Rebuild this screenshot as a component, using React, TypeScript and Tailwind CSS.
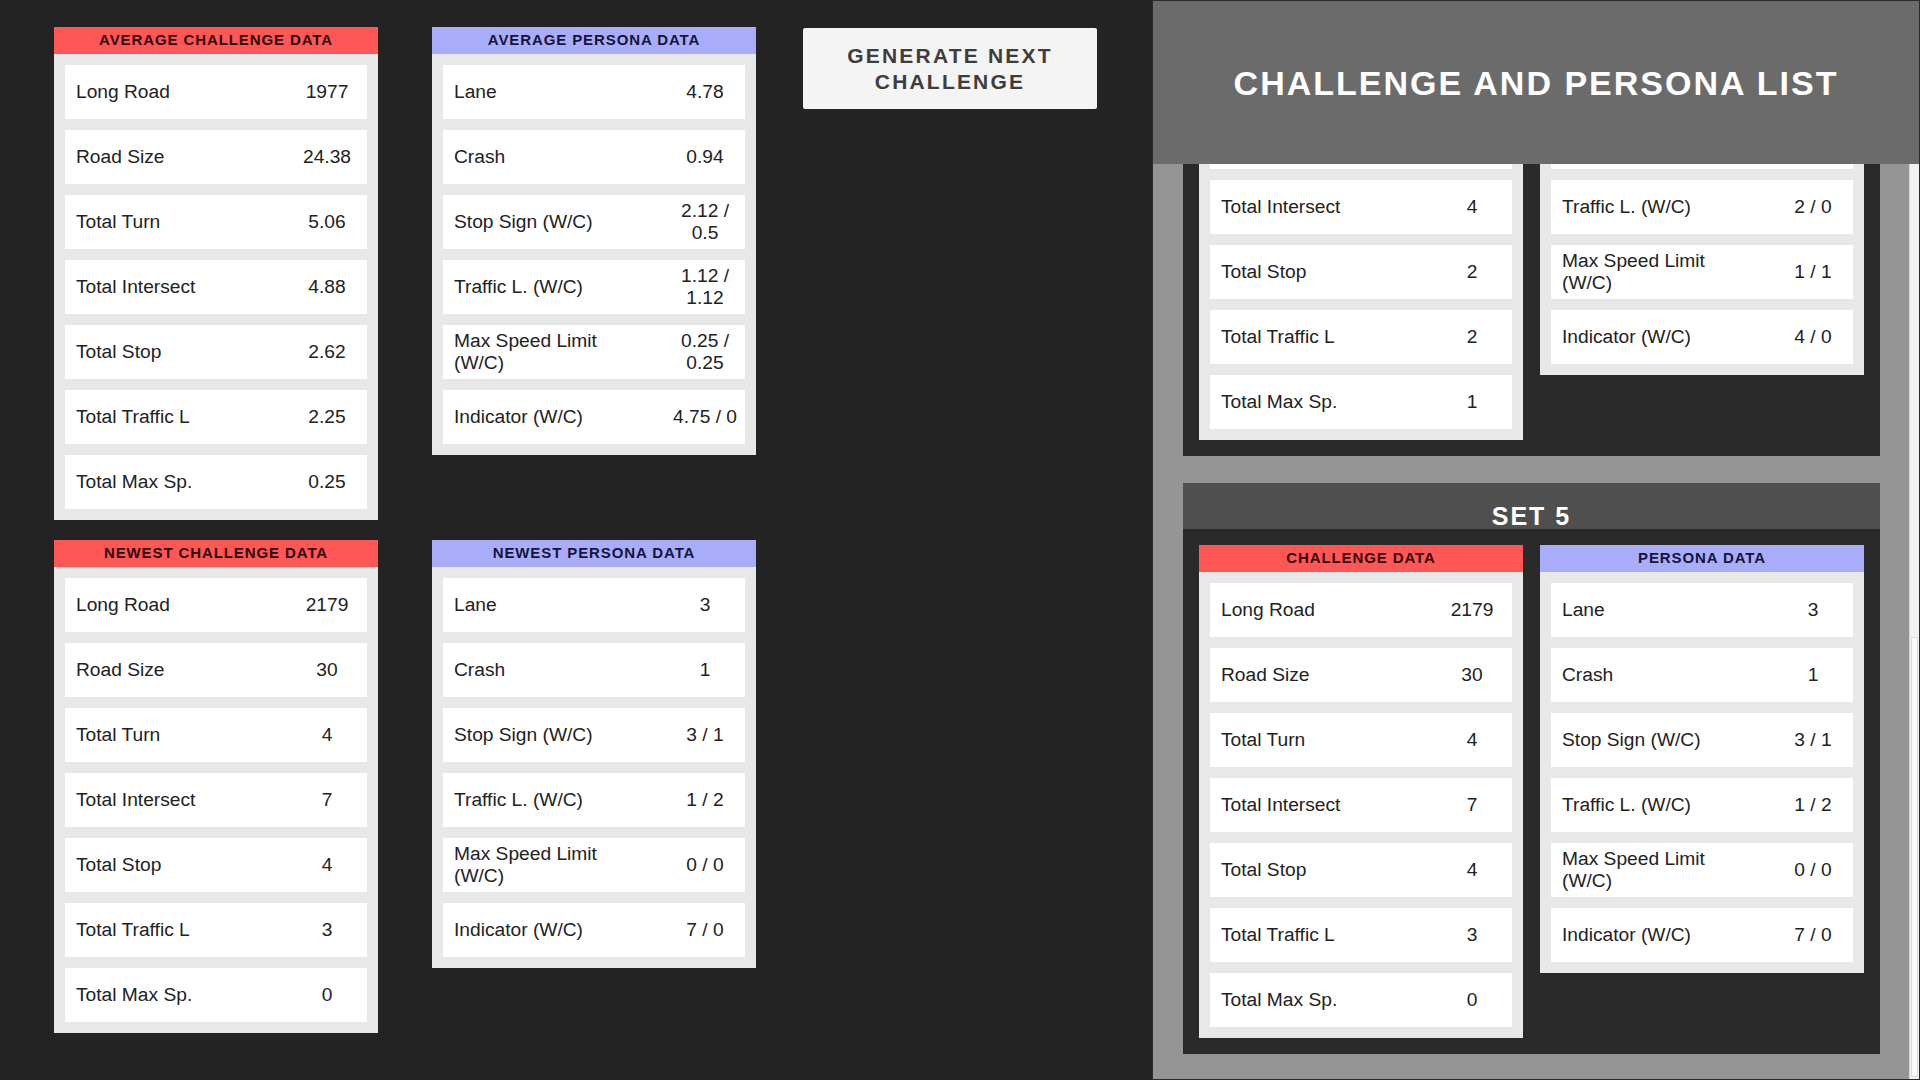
import React from "react";

type Row = { label: string; value: string };

const AVG_CHALLENGE: Row[] = [
  { label: "Long Road", value: "1977" },
  { label: "Road Size", value: "24.38" },
  { label: "Total Turn", value: "5.06" },
  { label: "Total Intersect", value: "4.88" },
  { label: "Total Stop", value: "2.62" },
  { label: "Total Traffic L", value: "2.25" },
  { label: "Total Max Sp.", value: "0.25" },
];

const AVG_PERSONA: Row[] = [
  { label: "Lane", value: "4.78" },
  { label: "Crash", value: "0.94" },
  { label: "Stop Sign (W/C)", value: "2.12 / 0.5" },
  { label: "Traffic L. (W/C)", value: "1.12 / 1.12" },
  { label: "Max Speed Limit (W/C)", value: "0.25 / 0.25" },
  { label: "Indicator (W/C)", value: "4.75 / 0" },
];

const NEW_CHALLENGE: Row[] = [
  { label: "Long Road", value: "2179" },
  { label: "Road Size", value: "30" },
  { label: "Total Turn", value: "4" },
  { label: "Total Intersect", value: "7" },
  { label: "Total Stop", value: "4" },
  { label: "Total Traffic L", value: "3" },
  { label: "Total Max Sp.", value: "0" },
];

const NEW_PERSONA: Row[] = [
  { label: "Lane", value: "3" },
  { label: "Crash", value: "1" },
  { label: "Stop Sign (W/C)", value: "3 / 1" },
  { label: "Traffic L. (W/C)", value: "1 / 2" },
  { label: "Max Speed Limit (W/C)", value: "0 / 0" },
  { label: "Indicator (W/C)", value: "7 / 0" },
];

const SETS = [
  {
    id: 4,
    challenge: [
      { label: "Long Road", value: "1845" },
      { label: "Road Size", value: "25" },
      { label: "Total Turn", value: "5" },
      { label: "Total Intersect", value: "4" },
      { label: "Total Stop", value: "2" },
      { label: "Total Traffic L", value: "2" },
      { label: "Total Max Sp.", value: "1" },
    ],
    persona: [
      { label: "Lane", value: "4" },
      { label: "Crash", value: "1" },
      { label: "Stop Sign (W/C)", value: "2 / 1" },
      { label: "Traffic L. (W/C)", value: "2 / 0" },
      { label: "Max Speed Limit (W/C)", value: "1 / 1" },
      { label: "Indicator (W/C)", value: "4 / 0" },
    ],
  },
  { id: 5, challenge: NEW_CHALLENGE, persona: NEW_PERSONA },
];

function DataPanel({ title, rows, kind }: { title: string; rows: Row[]; kind: "challenge" | "persona" }) {
  return (
    <div className="w-[324px] bg-[#e8e8e8]">
      {/* coloured title strip */}
      <div
        className={
          kind === "challenge"
            ? "h-[27px] flex items-center justify-center bg-[#ff5656] text-[#2e0606] text-[15px] font-bold tracking-[0.9px]"
            : "h-[27px] flex items-center justify-center bg-[#a9adf9] text-[#15153a] text-[15px] font-bold tracking-[0.9px]"
        }
      >
        {title}
      </div>
      <div className="flex flex-col gap-[11px] p-[11px]">
        {rows.map((row) => (
          <div key={row.label} className="h-[54px] flex items-center bg-white text-[19.2px] leading-[22px] text-[#222222]">
            <div className="flex-1 pl-[11px] pr-[30px]">{row.label}</div>
            <div className="w-[80px] shrink-0 px-[2px] text-center">{row.value}</div>
          </div>
        ))}
      </div>
    </div>
  );
}

function SetCard({ id, challenge, persona }: { id: number; challenge: Row[]; persona: Row[] }) {
  return (
    <div className="shrink-0 bg-[#2a2a2a]">
      <div className="h-[46px] flex items-end justify-center bg-[#4f4f4f]">
        <span className="text-[25px] leading-none font-bold text-white tracking-[2px]">SET {id}</span>
      </div>
      <div className="flex items-start gap-[17px] p-[16px]">
        <DataPanel title="CHALLENGE DATA" rows={challenge} kind="challenge" />
        <DataPanel title="PERSONA DATA" rows={persona} kind="persona" />
      </div>
    </div>
  );
}

export default function App() {
  return (
    <div className="w-[1920px] h-[1080px] flex bg-[#232323] font-['Liberation_Sans',Arial,sans-serif] overflow-hidden">
      {/* Stats area */}
      <div className="flex-1 flex items-start pl-[54px] pt-[27px]">
        <div className="grid grid-cols-[324px_324px] gap-x-[54px] gap-y-[20px] items-start">
          <DataPanel title="AVERAGE CHALLENGE DATA" rows={AVG_CHALLENGE} kind="challenge" />
          <DataPanel title="AVERAGE PERSONA DATA" rows={AVG_PERSONA} kind="persona" />
          <DataPanel title="NEWEST CHALLENGE DATA" rows={NEW_CHALLENGE} kind="challenge" />
          <DataPanel title="NEWEST PERSONA DATA" rows={NEW_PERSONA} kind="persona" />
        </div>
        <button className="ml-[47px] mt-[1px] w-[294px] h-[81px] px-[30px] bg-[#f4f4f4] rounded-[2px] text-[21px] leading-[26px] font-bold tracking-[2.2px] text-[#3d3d3d]">
          GENERATE NEXT CHALLENGE
        </button>
      </div>

      {/* Challenge list side panel */}
      <div className="w-[768px] h-[1080px] flex flex-col border border-[#2b2b2b]">
        <div className="h-[163px] shrink-0 flex items-center justify-center bg-[#6b6b6b]">
          <h1 className="text-[34px] leading-[40px] font-bold text-white tracking-[2px]">CHALLENGE AND PERSONA LIST</h1>
        </div>
        <div className="flex-1 min-h-0 flex bg-[#959595]">
          <div className="flex-1 min-h-0 flex flex-col justify-end gap-[27px] pl-[30px] pr-[29px] pb-[25px] overflow-hidden">
            {SETS.map((s) => (
              <SetCard key={s.id} id={s.id} challenge={s.challenge} persona={s.persona} />
            ))}
          </div>
          {/* scrollbar */}
          <div className="w-[10px] flex flex-col bg-[#f1f1f1] border-l border-[#d8d8d8]">
            <div className="flex-1" />
            <div className="h-[440px] mx-[1px] mb-[2px] bg-[#fafafa] border border-[#dcdcdc]" />
          </div>
        </div>
      </div>
    </div>
  );
}
